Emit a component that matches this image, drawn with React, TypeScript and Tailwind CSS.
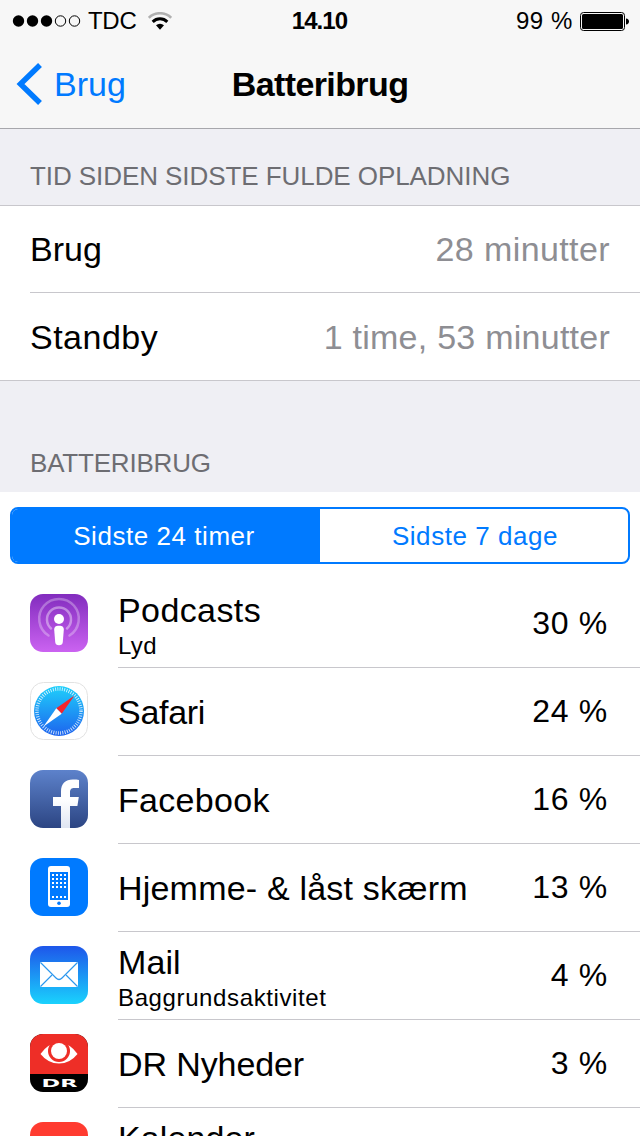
import type { ReactNode } from "react";

type AppUsage = {
  name: string;
  nameClass: string;
  detail?: string;
  detailClass?: string;
  percent?: string;
  icon: ReactNode;
};

function PodcastsIcon() {
  return (
    <svg className="size-[58px]" viewBox="0 0 58 58">
      <defs>
        <linearGradient id="podcasts" x1="0" y1="0" x2="0" y2="1">
          <stop offset="0" stopColor="#822cbe" />
          <stop offset="1" stopColor="#cb63f1" />
        </linearGradient>
      </defs>
      <rect width="58" height="58" rx="13" fill="url(#podcasts)" />
      <g fill="none" stroke="#fff" strokeLinecap="round">
        <path d="M18.500 41.500A19.800 19.800 0 1 1 39.500 41.500" strokeWidth="2.500" opacity="0.3" />
        <path d="M21 34.500A12 12 0 1 1 37 34.500" strokeWidth="2.500" opacity="0.4" />
      </g>
      <circle cx="29" cy="25" r="5" fill="#fff" />
      <path
        d="M29 31.700c3.600 0 5 1.500 4.800 4.200l-1 12.200c-.200 2.300-1.500 3.200-3.800 3.200s-3.600-.900-3.800-3.200l-1-12.200c-.200-2.700 1.200-4.200 4.800-4.200z"
        fill="#fff"
      />
    </svg>
  );
}

function SafariIcon() {
  return (
    <svg className="size-[58px]" viewBox="0 0 58 58">
      <defs>
        <linearGradient id="safari" x1="0" y1="0" x2="0" y2="1">
          <stop offset="0" stopColor="#1fd0fb" />
          <stop offset="1" stopColor="#1d63ee" />
        </linearGradient>
      </defs>
      <rect x="0.500" y="0.500" width="57" height="57" rx="13" fill="#fff" stroke="#e2e2e2" />
      <circle cx="29" cy="29" r="25" fill="url(#safari)" />
      <circle
        cx="29"
        cy="29"
        r="22"
        fill="none"
        stroke="#fff"
        strokeWidth="3.500"
        strokeDasharray="0.9 1.404"
        opacity="0.8"
      />
      <path d="M44.500 13.500L26.300 26.300 31.700 31.700z" fill="#f5242b" />
      <path d="M13.500 44.500L26.300 26.300 31.700 31.700z" fill="#fff" />
    </svg>
  );
}

function FacebookIcon() {
  return (
    <svg className="size-[58px]" viewBox="0 0 58 58">
      <defs>
        <linearGradient id="facebook" x1="0" y1="0" x2="0" y2="1">
          <stop offset="0" stopColor="#5d82cb" />
          <stop offset="1" stopColor="#2c4583" />
        </linearGradient>
        <linearGradient id="facebook-mark" x1="0" y1="0" x2="0" y2="1">
          <stop offset="0.4" stopColor="#fff" />
          <stop offset="1" stopColor="#dfe5f2" />
        </linearGradient>
      </defs>
      <rect width="58" height="58" rx="13" fill="url(#facebook)" />
      <path
        d="M31 58V36h-8v-9h8v-5.500c0-8 4.500-12 11.800-12 2.700 0 4.700.1 6.200.4V18h-4.300c-3.500 0-4.700 1.500-4.700 4.300V27h8.800l-1.400 9H40v22z"
        fill="url(#facebook-mark)"
      />
    </svg>
  );
}

function HomeScreenIcon() {
  return (
    <svg className="size-[58px]" viewBox="0 0 58 58">
      <rect width="58" height="58" rx="13" fill="#007aff" />
      <rect x="18" y="8" width="22" height="41" rx="3" fill="#fff" />
      <rect x="20" y="14" width="18" height="28" fill="#007aff" />
      {[16, 20, 24, 28, 38].map((y) =>
        [22, 26, 30, 34].map((x) => (
          <rect key={`${x}-${y}`} x={x} y={y} width="2" height="2" fill="#fff" />
        ))
      )}
      <circle cx="29" cy="45.300" r="1.800" fill="#007aff" />
    </svg>
  );
}

function MailIcon() {
  return (
    <svg className="size-[58px]" viewBox="0 0 58 58">
      <defs>
        <linearGradient id="mail" x1="0" y1="0" x2="0" y2="1">
          <stop offset="0" stopColor="#1e56ea" />
          <stop offset="1" stopColor="#1ad2fd" />
        </linearGradient>
      </defs>
      <rect width="58" height="58" rx="13" fill="url(#mail)" />
      <rect x="10" y="16" width="38" height="25" rx="1" fill="#fff" />
      <g fill="none" stroke="#2c97ee" strokeWidth="1.200">
        <path d="M10.500 16.500L26 32q3 3 6 0L47.500 16.500" />
        <path d="M10.500 40.500L22 29M47.500 40.500L36 29" />
      </g>
    </svg>
  );
}

function DrIcon() {
  return (
    <svg className="size-[58px]" viewBox="0 0 58 58">
      <clipPath id="dr">
        <rect width="58" height="58" rx="13" />
      </clipPath>
      <g clipPath="url(#dr)">
        <rect width="58" height="58" fill="#000" />
        <rect width="58" height="40" fill="#ee2e27" />
      </g>
      <path d="M10.500 20Q18 9 29 9T47.500 20Q40 29.500 29 29.500T10.500 20z" fill="#fff" />
      <circle cx="29" cy="17" r="11" fill="#ee2e27" />
      <circle cx="29" cy="17" r="8" fill="#fff" />
      <text
        x="11.500"
        y="53"
        textLength="36"
        lengthAdjust="spacingAndGlyphs"
        fill="#fff"
        fontFamily="DejaVu Sans, sans-serif"
        fontWeight="bold"
        fontSize="10.500"
      >
        DR
      </text>
    </svg>
  );
}

function CalendarIcon() {
  return (
    <svg className="size-[58px]" viewBox="0 0 58 58">
      <rect width="58" height="58" rx="13" fill="#ff3b30" />
    </svg>
  );
}

const apps: AppUsage[] = [
  {
    name: "Podcasts",
    nameClass: "tracking-[0.4px]",
    detail: "Lyd",
    detailClass: "tracking-[0.4px]",
    percent: "30 %",
    icon: <PodcastsIcon />,
  },
  { name: "Safari", nameClass: "tracking-[-0.3px]", percent: "24 %", icon: <SafariIcon /> },
  { name: "Facebook", nameClass: "tracking-[0.3px]", percent: "16 %", icon: <FacebookIcon /> },
  {
    name: "Hjemme- & låst skærm",
    nameClass: "tracking-[0.2px]",
    percent: "13 %",
    icon: <HomeScreenIcon />,
  },
  {
    name: "Mail",
    nameClass: "tracking-[0.1px]",
    detail: "Baggrundsaktivitet",
    detailClass: "tracking-[0.62px]",
    percent: "4 %",
    icon: <MailIcon />,
  },
  { name: "DR Nyheder", nameClass: "tracking-[-0.1px]", percent: "3 %", icon: <DrIcon /> },
  { name: "Kalender", nameClass: "tracking-[0.1px]", detail: "\u00a0", icon: <CalendarIcon /> },
];

function StatusBar() {
  return (
    <div className="grid h-10 grid-cols-3 items-center pt-px pr-[11px] pl-3 text-2xl leading-10">
      <div className="flex items-center">
        <svg className="h-3 w-[70px]" viewBox="0 0 70 12">
          {[6.5, 20.5, 34.5].map((x) => (
            <circle key={x} cx={x} cy="6" r="5.700" />
          ))}
          {[48.5, 62.5].map((x) => (
            <circle key={x} cx={x} cy="6" r="5.200" fill="none" stroke="#000" />
          ))}
        </svg>
        <span className="ml-1.5 tracking-[-0.3px]">TDC</span>
        <svg className="ml-3 h-[18px] w-6" viewBox="0 0 24 18" fill="none">
          <path d="M0.800 5.800A16 16 0 0 1 23.200 5.800" stroke="#b0b0b0" strokeWidth="2.600" />
          <path d="M4.700 9.800A10.500 10.500 0 0 1 19.300 9.800" stroke="#000" strokeWidth="3" />
          <path d="M8 13.200A6 6 0 0 1 16 13.200L12 17.700z" fill="#000" />
        </svg>
      </div>
      <span className="pr-0.5 text-center font-bold tracking-[-0.9px]">14.10</span>
      <div className="flex items-center justify-end">
        <span className="tracking-[0.6px]">99 %</span>
        <svg className="ml-[7px] h-[19px] w-[49px]" viewBox="0 0 49 19">
          <rect x="0.500" y="0.500" width="44" height="18" rx="3" fill="none" stroke="#000" />
          <rect x="2" y="2" width="41" height="15" rx="1.500" />
          <path d="M46 6.500c4 0 4 6 0 6z" />
        </svg>
      </div>
    </div>
  );
}

function NavBar() {
  return (
    <div className="grid h-22 grid-cols-3 items-center px-4">
      <div className="flex items-center text-[#007aff]">
        <svg className="h-[42px] w-[26px]" viewBox="0 0 26 42">
          <path d="M24 2L4.500 21 24 40" fill="none" stroke="currentColor" strokeWidth="5.500" />
        </svg>
        <span className="ml-3">Brug</span>
      </div>
      <h1 className="text-center font-bold tracking-[-0.6px]">Batteribrug</h1>
    </div>
  );
}

function AppRow({ name, nameClass, detail, detailClass = "", percent, icon }: AppUsage) {
  return (
    <li className="flex h-22 items-center pl-[30px]">
      <div className="mb-0.5">{icon}</div>
      <div className="ml-[30px] flex h-22 flex-1 items-center justify-between border-b border-[#c8c7cc] pr-8">
        <div className="whitespace-nowrap">
          <p className={`leading-10 ${nameClass}`}>{name}</p>
          {detail && <p className={`-mb-1 text-2xl leading-8 ${detailClass}`}>{detail}</p>}
        </div>
        <span className="mb-0.5 text-[32px] tracking-[0.7px]">{percent}</span>
      </div>
    </li>
  );
}

export default function App() {
  return (
    <div className="h-[1136px] w-[640px] overflow-hidden bg-[#efeff4] font-['Liberation_Sans',Arial,sans-serif] text-[34px] leading-10 text-black">
      <header className="h-[129px] border-b border-[#a7a7ac] bg-[#f7f7f7]">
        <StatusBar />
        <NavBar />
      </header>

      <h2 className="h-19 pt-[27px] pl-[30px] text-[26px] leading-10 tracking-[-0.07px] text-[#6d6d72]">
        TID SIDEN SIDSTE FULDE OPLADNING
      </h2>
      <section className="border-y border-[#c8c7cc] bg-white pl-[30px]">
        <div className="flex h-[87px] items-center justify-between border-b border-[#c8c7cc] pr-[30px]">
          <span>Brug</span>
          <span className="tracking-[0.4px] text-[#8e8e93]">28 minutter</span>
        </div>
        <div className="flex h-[87px] items-center justify-between pr-[30px]">
          <span className="tracking-[0.5px]">Standby</span>
          <span className="tracking-[0.25px] text-[#8e8e93]">1 time, 53 minutter</span>
        </div>
      </section>

      <h2 className="h-[111px] pt-[62px] pl-[30px] text-[26px] leading-10 tracking-[-0.2px] text-[#6d6d72]">
        BATTERIBRUG
      </h2>
      <section className="bg-white pt-[15px]">
        {/* Period switch */}
        <div className="mx-2.5 grid h-[57px] grid-cols-2 overflow-hidden rounded-lg border-2 border-[#007aff] text-[26px] tracking-[0.55px]">
          <button className="bg-[#007aff] pr-1 text-white">Sidste 24 timer</button>
          <button className="pl-0.5 text-[#007aff]">Sidste 7 dage</button>
        </div>
        <ul className="mt-4">
          {apps.map((app) => (
            <AppRow key={app.name} {...app} />
          ))}
        </ul>
      </section>
    </div>
  );
}
